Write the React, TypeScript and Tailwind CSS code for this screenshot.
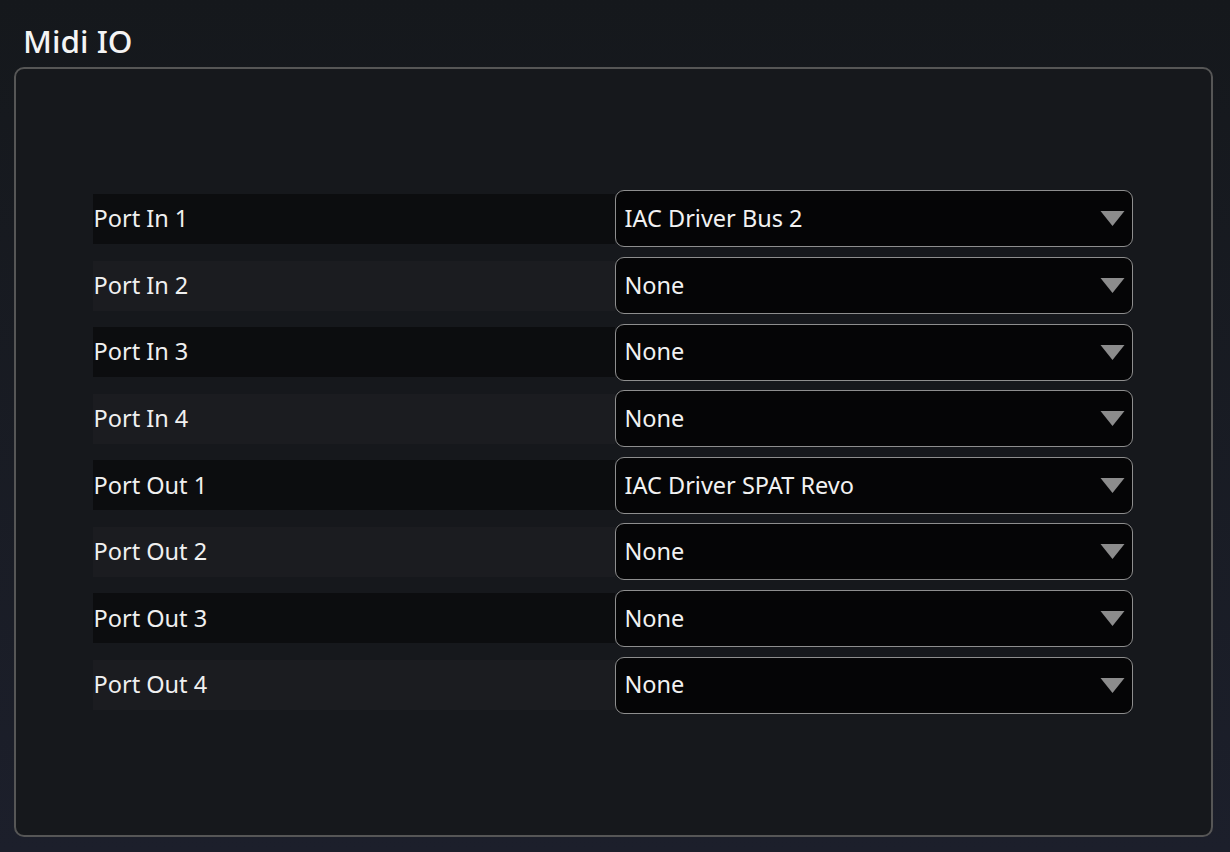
import React from "react";

interface PortRow {
  label: string;
  value: string;
}

const ports: PortRow[] = [
  { label: "Port In 1", value: "IAC Driver Bus 2" },
  { label: "Port In 2", value: "None" },
  { label: "Port In 3", value: "None" },
  { label: "Port In 4", value: "None" },
  { label: "Port Out 1", value: "IAC Driver SPAT Revo" },
  { label: "Port Out 2", value: "None" },
  { label: "Port Out 3", value: "None" },
  { label: "Port Out 4", value: "None" },
];

const SelectBox: React.FC<{ value: string }> = ({ value }) => (
  <div className="flex h-[57px] w-[518px] shrink-0 items-center justify-between rounded-[9px] border-[1.5px] border-[#8e8e8e] bg-[#050506] pl-[9px] pr-[7px]">
    <span className="text-[23.5px] leading-none text-[#f2f2f2]">{value}</span>
    <svg width="25" height="17" viewBox="0 0 25 17" aria-hidden="true">
      <polygon points="0.5,1 24.5,1 12.5,16" fill="#8c8c8c" />
    </svg>
  </div>
);

const App: React.FC = () => {
  return (
    <div
      className="flex h-screen w-full flex-col bg-gradient-to-b from-[#15181c] to-[#1c1f2b] text-white"
      style={{ fontFamily: '"Noto Sans", "Open Sans", sans-serif' }}
    >
      <h1 className="ml-[23px] mt-[23px] mb-[8px] text-[31.5px] font-medium leading-[36px] text-[#f4f4f4]">
        Midi IO
      </h1>

      <div className="mb-[15px] ml-[14px] mr-[17px] flex flex-1 items-center justify-center rounded-[10px] border-2 border-[#565656] bg-[#16181c] pr-[2px]">
        <div className="flex w-[1040px] flex-col gap-[16.6px]">
          {ports.map((port, i) => (
            <div key={port.label} className="flex h-[50px] items-center">
              <div
                className={`flex h-full flex-1 items-center pl-[1px] text-[23.5px] leading-none text-[#f0f0f0] ${
                  i % 2 === 0 ? "bg-[#0c0d0f]" : "bg-[#1b1c20]"
                }`}
              >
                {port.label}
              </div>
              <SelectBox value={port.value} />
            </div>
          ))}
        </div>
      </div>
    </div>
  );
};

export default App;
